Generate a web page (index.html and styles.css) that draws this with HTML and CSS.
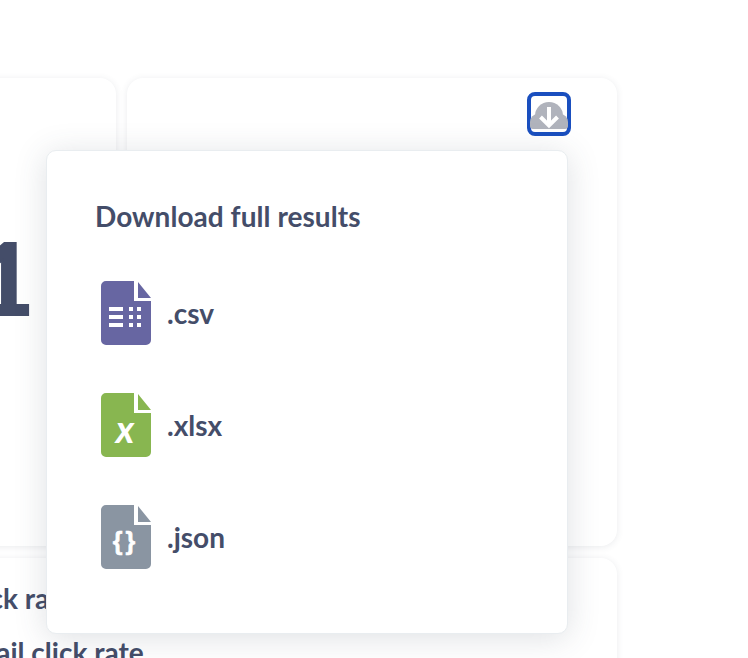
FILE: index.html
```html
<!DOCTYPE html>
<html lang="en">
<head>
    <meta charset="UTF-8">
    <title>Download results</title>
    <link rel="stylesheet" href="styles.css">
</head>
<body>

    <div class="board">
        <div class="card stat-card">
            <div class="big-number">1</div>
        </div>
        <div class="card action-card">
            <button class="download-btn" aria-label="Download">
                <svg width="38" height="27" viewBox="0 0 38 27">
                    <circle cx="19" cy="14" r="14" fill="#b0b3bc"/>
                    <path fill="#b0b3bc" d="M0 24v-4a8 8 0 0 1 8-8h22a8 8 0 0 1 8 8v4a3 3 0 0 1-3 3H3a3 3 0 0 1-3-3z"/>
                    <path fill="none" stroke="#fff" stroke-width="4" d="M19 5v18M10.500 15l8.500 8.500 8.500-8.500"/>
                </svg>
            </button>
        </div>
        <div class="card list-card">
            <p class="list-row">Click rate</p>
            <p class="list-row">Email click rate</p>
        </div>
    </div>

    <!-- Download menu -->
    <div class="popover">
        <h2 class="popover-title">Download full results</h2>
        <a class="file-row">
            <svg class="file-icon" viewBox="0 0 50 64">
                <path fill="#6766a2" d="M5 0h28v20h17v39a5 5 0 0 1-5 5H5a5 5 0 0 1-5-5V5a5 5 0 0 1 5-5z"/>
                <path fill="#6766a2" d="M37 1l13 16H37z"/>
                <path fill="#fff" d="M8 26h14v4H8zM8 34h14v4H8zM8 42h14v4H8zM28 26h4v4h-4zM36 26h4v4h-4zM28 34h4v4h-4zM36 34h4v4h-4zM28 42h4v4h-4zM36 42h4v4h-4z"/>
            </svg>
            <span>.csv</span>
        </a>
        <a class="file-row">
            <svg class="file-icon" viewBox="0 0 50 64">
                <path fill="#88b650" d="M5 0h28v20h17v39a5 5 0 0 1-5 5H5a5 5 0 0 1-5-5V5a5 5 0 0 1 5-5z"/>
                <path fill="#88b650" d="M37 1l13 16H37z"/>
                <text class="file-x" x="24" y="50" text-anchor="middle">x</text>
            </svg>
            <span>.xlsx</span>
        </a>
        <a class="file-row">
            <svg class="file-icon" viewBox="0 0 50 64">
                <path fill="#8a95a2" d="M5 0h28v20h17v39a5 5 0 0 1-5 5H5a5 5 0 0 1-5-5V5a5 5 0 0 1 5-5z"/>
                <path fill="#8a95a2" d="M37 1l13 16H37z"/>
                <text class="file-braces" x="24.500" y="45" text-anchor="middle">{}</text>
            </svg>
            <span>.json</span>
        </a>
    </div>

</body>
</html>
```

FILE: styles.css
```css
* {
    margin: 0;
    padding: 0;
    box-sizing: border-box;
}

html, body {
    height: 100%;
    overflow: hidden;
}

body {
    position: relative;
    background-color: #fff;
    color: #444d69;
    font-family: 'Lato', sans-serif;
}

.board {
    display: grid;
    grid-template-columns: 490px 490px;
    grid-auto-rows: 468px;
    gap: 12px 11px;
    width: 991px;
    margin-left: -374px;
    padding-top: 78px;
}

.card {
    position: relative;
    background-color: #fff;
    border-radius: 16px;
    box-shadow: 0 1px 7px rgba(60, 70, 90, 0.11);
}

.stat-card {
    display: flex;
    justify-content: flex-end;
    padding-top: 149px;
}

.big-number {
    margin-right: 82px;
    font-size: 99px;
    font-weight: 900;
    line-height: 1;
    -webkit-text-stroke: 2px #444d69;
}

.action-card {
    display: flex;
    justify-content: flex-end;
    align-items: flex-start;
    padding: 14px 46px 0 0;
}

.download-btn {
    display: flex;
    align-items: flex-end;
    justify-content: center;
    width: 44px;
    height: 44px;
    padding-bottom: 3px;
    background: none;
    border: 4px solid #1a4fbf;
    border-radius: 8px;
}

.download-btn svg {
    flex: none;
}

.list-card {
    grid-column: 1 / 3;
    padding: 23px 0 0 331px;
}

.list-row {
    font-size: 28px;
    font-weight: 700;
    line-height: 34px;
    margin-bottom: 20px;
    white-space: nowrap;
}

.popover {
    position: absolute;
    left: 46px;
    top: 150px;
    width: 522px;
    height: 484px;
    padding: 47px 54px 0 48px;
    background-color: #fff;
    border: 1px solid #e9edf0;
    border-radius: 10px;
    box-shadow: 0 4px 32px rgba(60, 70, 90, 0.17);
}

.popover-title {
    font-size: 28px;
    font-weight: 700;
    line-height: 36px;
    letter-spacing: 0.05px;
    margin-bottom: 47px;
}

.file-row {
    display: flex;
    align-items: center;
    gap: 16px;
    height: 64px;
    margin-left: 6px;
    margin-bottom: 48px;
    font-size: 28px;
    font-weight: 700;
}

.file-icon {
    flex: none;
    width: 50px;
    height: 64px;
}

.file-x {
    fill: #fff;
    font-family: 'Lato', sans-serif;
    font-size: 38px;
    font-weight: 700;
    font-style: italic;
}

.file-braces {
    fill: #fff;
    stroke: #fff;
    stroke-width: 0.6px;
    font-family: 'Liberation Sans', sans-serif;
    font-size: 25px;
    font-weight: 700;
    letter-spacing: 3px;
}
```
